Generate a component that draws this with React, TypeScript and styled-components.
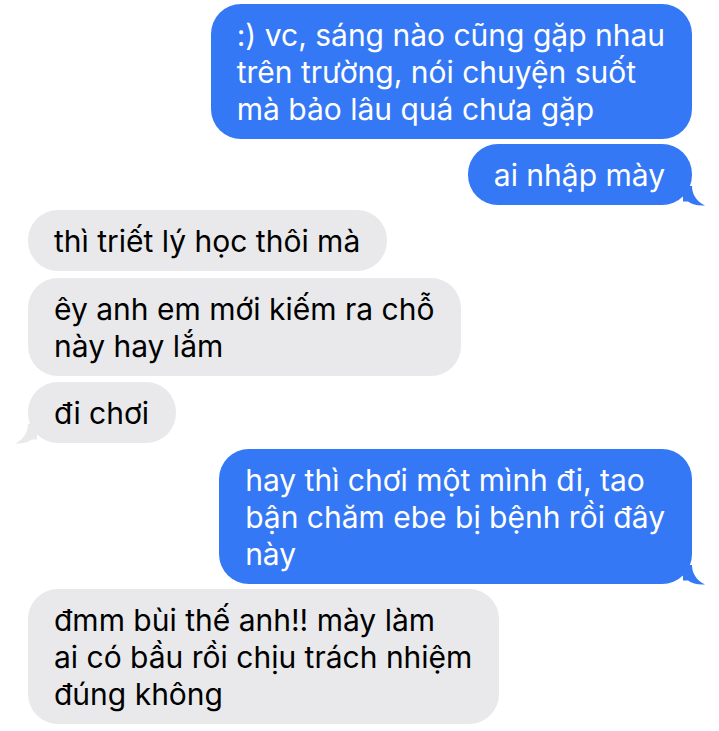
import React from 'react';
import styled, { createGlobalStyle } from 'styled-components';

const GlobalStyle = createGlobalStyle`
  html, body {
    margin: 0;
    padding: 0;
    background: #ffffff;
  }
  body {
    font-family: Inter, 'Noto Sans', 'Liberation Sans', sans-serif;
    -webkit-font-smoothing: antialiased;
  }
`;

const Colors = {
  BLUE: '#3478f6',
  GRAY: '#e9e9eb',
  WHITE: '#ffffff',
  BLACK: '#000000',
};

type Side = 'me' | 'them';

interface Message {
  side: Side;
  lines: string[];
  tail?: boolean;
  gap: number;
}

const Thread = styled.div`
  width: 719px;
  height: 731px;
  box-sizing: border-box;
  padding: 4px 27px 0 28px;
  display: flex;
  flex-direction: column;
  overflow: hidden;
`;

const Row = styled.div<{ $side: Side; $gap: number }>`
  display: flex;
  justify-content: ${p => (p.$side === 'me' ? 'flex-end' : 'flex-start')};
  margin-top: ${p => p.$gap}px;
`;

const Bubble = styled.div<{ $side: Side }>`
  position: relative;
  box-sizing: border-box;
  padding: 13px 27px 11px 26px;
  border-radius: 30px;
  background-color: ${p => (p.$side === 'me' ? Colors.BLUE : Colors.GRAY)};
  color: ${p => (p.$side === 'me' ? Colors.WHITE : Colors.BLACK)};
  font-size: 30px;
  line-height: 37px;
  white-space: nowrap;
`;

const Tail = styled.svg<{ $side: Side }>`
  position: absolute;
  bottom: -1px;
  width: 22px;
  height: 20px;
  ${p => (p.$side === 'me' ? 'right: -13px;' : 'left: -13px; transform: scaleX(-1);')}
`;

const messages: Message[] = [
  {
    side: 'me',
    lines: [':) vc, sáng nào cũng gặp nhau', 'trên trường, nói chuyện suốt', 'mà bảo lâu quá chưa gặp'],
    gap: 0,
  },
  { side: 'me', lines: ['ai nhập mày'], tail: true, gap: 5 },
  { side: 'them', lines: ['thì triết lý học thôi mà'], gap: 5 },
  { side: 'them', lines: ['êy anh em mới kiếm ra chỗ', 'này hay lắm'], gap: 7 },
  { side: 'them', lines: ['đi chơi'], tail: true, gap: 6 },
  {
    side: 'me',
    lines: ['hay thì chơi một mình đi, tao', 'bận chăm ebe bị bệnh rồi đây', 'này'],
    tail: true,
    gap: 6,
  },
  {
    side: 'them',
    lines: ['đmm bùi thế anh!! mày làm', 'ai có bầu rồi chịu trách nhiệm', 'đúng không'],
    gap: 5,
  },
];

const App: React.FC = () => {
  return (
    <>
      <GlobalStyle />
      <Thread>
        {messages.map((m, i) => (
          <Row key={i} $side={m.side} $gap={m.gap}>
            <Bubble $side={m.side}>
              {m.lines.map((line, j) => (
                <React.Fragment key={j}>
                  {j > 0 && <br />}
                  {line}
                </React.Fragment>
              ))}
              {m.tail && (
                <Tail $side={m.side} viewBox="0 0 22 20" xmlns="http://www.w3.org/2000/svg">
                  <path
                    fill={m.side === 'me' ? Colors.BLUE : Colors.GRAY}
                    d="M0 0 L9 0 C9 8 13 15 22 19.5 C15 20 9 18.5 5 15.5 L0 15.5 Z"
                  />
                </Tail>
              )}
            </Bubble>
          </Row>
        ))}
      </Thread>
    </>
  );
};

export default App;
